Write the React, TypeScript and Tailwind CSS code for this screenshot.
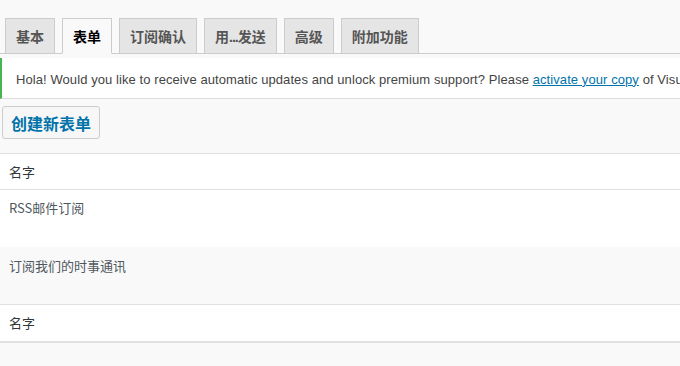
import React from "react";

const tabs = ["基本", "表单", "订阅确认", "用...发送", "高级", "附加功能"];

export default function App() {
  return (
    <div
      className="w-[680px] h-[366px] overflow-hidden bg-[#f9f9f9] text-[#444]"
      style={{ fontFamily: '"Liberation Sans", "Noto Sans CJK SC", sans-serif' }}
    >
      <div className="pt-[18px] border-b border-[#ccc] flex pl-[5px] gap-[7px] h-[54px]">
        {tabs.map((t, i) => {
          const active = i === 1;
          const parts = t.split("...");
          return (
            <div
              key={t}
              className={
                "h-[36px] -mb-px px-[10px] border border-[#ccc] text-[14px] leading-[34px] font-bold whitespace-nowrap " +
                (active
                  ? "bg-[#f9f9f9] border-b-[#f9f9f9] text-[#000]"
                  : "bg-[#e5e5e5] text-[#555]")
              }
              style={{ fontFamily: '"Noto Sans CJK SC", sans-serif' }}
            >
              {parts.length > 1 ? (
                <>
                  {parts[0]}
                  <span className="tracking-[-1px]" style={{ fontFamily: '"Liberation Sans", sans-serif' }}>
                    ...
                  </span>
                  {parts[1]}
                </>
              ) : (
                t
              )}
            </div>
          );
        })}
      </div>

      <div className="mt-[4px] h-[41px] bg-white border-l-[2px] border-[#46b450] border-b border-b-[#dcdcdc] flex items-center pt-[3px] pl-[14px] whitespace-nowrap text-[13px] tracking-[0.08px] text-[#444]">
        Hola! Would you like to receive automatic updates and unlock premium support? Please&nbsp;
        <span className="text-[#0073aa] underline">activate your copy</span>
        &nbsp;of Visual Form Builder Pro.
      </div>

      <div className="mt-[7px] ml-[2px] w-[98px] h-[33px] border border-[#ccc] rounded-[3px] bg-[#f7f7f7] flex items-center justify-center">
        <span
          className="text-[16px] font-bold text-[#0073aa] leading-none"
          style={{ fontFamily: '"Noto Sans CJK SC", sans-serif' }}
        >
          创建新表单
        </span>
      </div>

      <div
        className="mt-[14px] border-t border-[#e1e1e1] text-[13px] text-[#32373c]"
        style={{ fontFamily: '"Noto Sans CJK SC", sans-serif' }}
      >
        <div className="h-[36px] bg-white border-b border-[#e1e1e1] flex items-center pl-[9px]">名字</div>
        <div className="h-[57px] bg-white pl-[9px] pt-[8px] leading-[20px] text-[#50575e]">RSS邮件订阅</div>
        <div className="h-[58px] bg-[#f9f9f9] border-b border-[#e1e1e1] pl-[9px] pt-[9px] leading-[20px] text-[#50575e]">
          订阅我们的时事通讯
        </div>
        <div className="h-[38px] bg-white border-b-[2px] border-[#e1e1e1] flex items-center pl-[9px]">名字</div>
      </div>
    </div>
  );
}
